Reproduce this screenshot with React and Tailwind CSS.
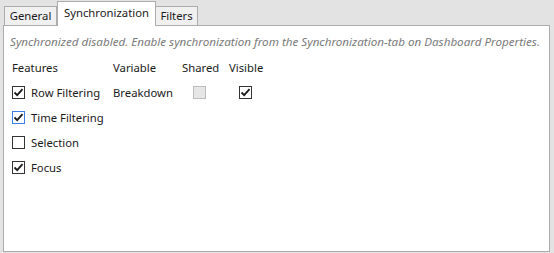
import React from "react";

function Check({ checked, variant = "normal" }) {
  const cls =
    variant === "focus"
      ? "border-[#3c7fde] bg-white"
      : variant === "disabled"
      ? "border-[#bcbcbc] bg-[#e6e6e6]"
      : "border-[#333333] bg-white";
  return (
    <div className={`w-[13px] h-[13px] border ${cls} flex items-center justify-center shrink-0`}>
      {checked && (
        <svg width="11" height="11" viewBox="0 0 11 11">
          <path d="M1.5 5.5 L4.2 8.2 L9.5 2.2" fill="none" stroke="#1a1a1a" strokeWidth="1.8" />
        </svg>
      )}
    </div>
  );
}

export default function App() {
  const font = { fontFamily: '"Noto Sans", "Open Sans", sans-serif' };
  const rows = [
    { label: "Row Filtering", checked: true, v: "normal" },
    { label: "Time Filtering", checked: true, v: "focus" },
    { label: "Selection", checked: false, v: "normal" },
    { label: "Focus", checked: true, v: "normal" },
  ];
  return (
    <div
      className="w-[554px] h-[253px] bg-[#e3e3e3] pl-[3px] pt-[2px] flex flex-col text-[11.3px] text-[#1a1a1a] leading-none"
      style={font}
    >
      <div className="flex items-end h-[23px] pl-[1px]">
        <div className="w-[53px] h-[19px] border border-b-0 border-[#acacac] bg-[#f0f0f0] flex items-center justify-center pb-[1px]">
          General
        </div>
        <div className="relative z-10 -mb-px w-[99px] h-[25px] border border-b-0 border-[#acacac] bg-white flex items-center justify-center pb-[3px]">
          Synchronization
        </div>
        <div className="w-[42px] h-[19px] border border-b-0 border-l-0 border-[#acacac] bg-[#f0f0f0] flex items-center justify-center pb-[1px]">
          Filters
        </div>
      </div>
      <div className="w-[547px] h-[227px] border border-[#acacac] bg-white pl-[6px] pt-[9px]">
        <div className="italic text-[11.65px] text-[#7a7a7a] whitespace-nowrap h-[14px] flex items-center">
          Synchronized disabled. Enable synchronization from the Synchronization-tab on Dashboard Properties.
        </div>
        <div className="grid grid-cols-[101px_69px_47px_auto] pl-[2px] pt-[12px]">
          <div className="h-[13px] flex items-center">Features</div>
          <div className="h-[13px] flex items-center">Variable</div>
          <div className="h-[13px] flex items-center">Shared</div>
          <div className="h-[13px] flex items-center">Visible</div>
        </div>
        <div className="flex flex-col pl-[2px] pt-[12px] gap-[12px]">
          {rows.map((r, i) => (
            <div key={r.label} className="grid grid-cols-[101px_80px_46px_auto] items-center h-[13px]">
              <div className="flex items-center gap-[6px]">
                <Check checked={r.checked} variant={r.v} />
                <span>{r.label}</span>
              </div>
              {i === 0 ? (
                <>
                  <div>Breakdown</div>
                  <div><Check checked={false} variant="disabled" /></div>
                  <div><Check checked={true} /></div>
                </>
              ) : null}
            </div>
          ))}
        </div>
      </div>
    </div>
  );
}
